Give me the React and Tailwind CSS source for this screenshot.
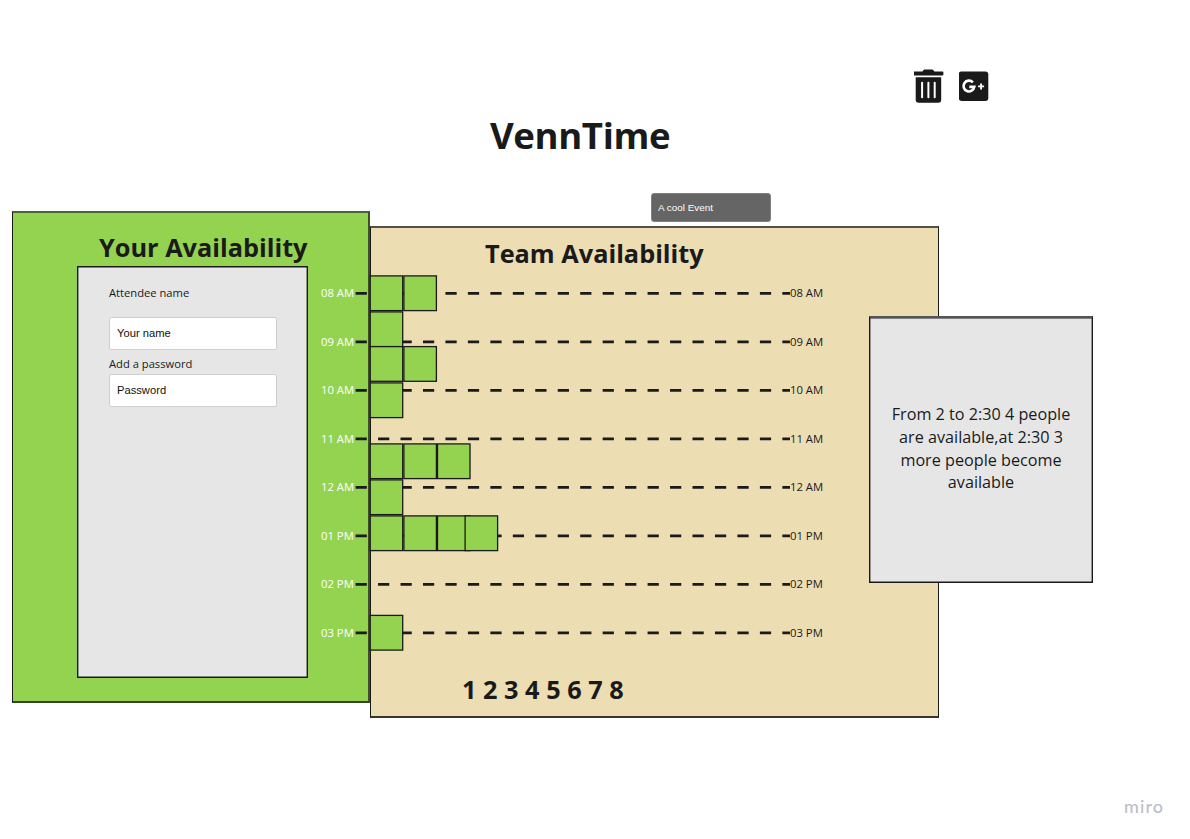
const HOURS = ["08 AM", "09 AM", "10 AM", "11 AM", "12 AM", "01 PM", "02 PM", "03 PM"];

// Availability blocks in chart coordinates: [x, y] of the top left corner
const BLOCKS = [
  [15.2, 1.9], [48.9, 1.9],
  [15.2, 37.9],
  [15.2, 72.6], [48.9, 72.6],
  [15.2, 108.9],
  [15.2, 169.9], [48.9, 169.9], [82.5, 169.9],
  [15.2, 205.9],
  [15.2, 241.9], [48.9, 241.9], [82.5, 241.9], [110.1, 241.9],
  [15.2, 341.4],
];

function TrashIcon() {
  return (
    <svg width="30" height="34" viewBox="0.6 -0.4 30 34" fill="#1a1a1a">
      <path d="M0.8 2.2h8.2l1.2-1.7q.3-.4.8-.4h8q.5 0 .8.4l1.2 1.7h8.2q.8 0 .8.8v2.2q0 .8-.8.8H.8q-.8 0-.8-.8V3q0-.8.8-.8z" />
      <path
        fillRule="evenodd"
        d="M2.3 7.9h25.5v22.5q0 3-3 3H5.3q-3 0-3-3zM7.7 13.1v14.9q0 .8 1 .8t1-.8V13.1q0-.8-1-.8t-1 .8zM14 13.1v14.9q0 .8 1 .8t1-.8V13.1q0-.8-1-.8t-1 .8zM20.3 13.1v14.9q0 .8 1 .8t1-.8V13.1q0-.8-1-.8t-1 .8z"
      />
    </svg>
  );
}

function GooglePlusIcon() {
  return (
    <svg width="30" height="30" viewBox="0.3 -0.4 30 30">
      <rect width="29.6" height="29.6" rx="3" fill="#1a1a1a" />
      <path d="M14.2 10.9A5.4 5.4 0 1 0 15.6 15.5H10.6" fill="none" stroke="#fff" strokeWidth="2.6" />
      <path d="M22.4 12v6M19.4 15h6" stroke="#fff" strokeWidth="1.9" />
    </svg>
  );
}

function Chart() {
  return (
    <svg width="436" height="380" viewBox="0 0 436 380">
      {HOURS.map((h, i) => (
        <line
          key={h}
          x1="0.6" x2="435" y1={19.4 + i * 48.5} y2={19.4 + i * 48.5}
          stroke="#1a1a1a" strokeWidth="2.6" strokeDasharray="11.23 11.23"
        />
      ))}
      {BLOCKS.map(([x, y]) => (
        <rect key={`${x}-${y}`} x={x} y={y} width="32.5" height="34.7" fill="#94d350" stroke="#1a1a1a" strokeWidth="1.3" />
      ))}
    </svg>
  );
}

function Hours({ className }) {
  return (
    <ul className={`flex flex-col text-[11.3px] whitespace-nowrap ${className}`}>
      {HOURS.map((h) => (
        <li key={h} className="flex h-[48.5px] items-center">{h}</li>
      ))}
    </ul>
  );
}

function Field({ value }) {
  return (
    <div className="flex h-[33px] w-[168px] items-center rounded-[2px] border border-[#cfcfcf] bg-white px-[7px] font-['Liberation_Sans',sans-serif] text-[11.2px] text-[#111]">
      {value}
    </div>
  );
}

export default function App() {
  return (
    <div className="relative h-[839px] w-[1190px] overflow-hidden bg-white font-['Open_Sans',sans-serif] text-[#1a1a1a]">
      <header className="flex h-[211px] flex-col">
        <div className="flex gap-[15px] pt-[69px] pl-[914px]">
          <TrashIcon />
          <div className="pt-[2px]"><GooglePlusIcon /></div>
        </div>
        <h1 className="mt-[6px] ml-[490px] text-[36.6px] leading-[52px] font-bold tracking-[-0.4px]">VennTime</h1>
        <div className="mt-[32px] ml-[651px] flex h-[29px] w-[120px] shrink-0 items-center rounded-[3px] border border-[#808080] bg-[#656565] px-[6px] pt-px font-['Liberation_Sans',sans-serif] text-[9.9px] text-white">
          A cool Event
        </div>
      </header>

      <main className="flex pl-[12px]">
        <section className="h-[492px] w-[358px] shrink-0 border border-t-2 border-r-2 border-b-2 border-[#1a1a1a] border-t-[#4f6238] border-r-[#3f5026] border-b-[#37451f] bg-[#94d350]">
          <h2 className="ml-[86px] h-[53px] pt-[16px] text-[25.3px] leading-[36px] font-bold whitespace-nowrap">Your Availability</h2>
          <div className="flex">
            <div className="ml-[64px] h-[412px] w-[231px] shrink-0 border border-[#1a1a1a] bg-[#e6e6e6] pl-[31px] text-[11.2px] shadow-[inset_0_0_0_0.4px_#1a1a1a]">
              <p className="mt-[18px] leading-4">Attendee name</p>
              <div className="mt-[16px]"><Field value="Your name" /></div>
              <p className="mt-[6px] leading-4">Add a password</p>
              <div className="mt-[2px]"><Field value="Password" /></div>
            </div>
            <Hours className="mt-[3.4px] ml-[13px] font-medium text-white" />
          </div>
        </section>

        <section className="relative mt-[15px] h-[492px] w-[569px] shrink-0 border border-t-2 border-b-2 border-[#1a1a1a] border-t-[#55514a] border-b-[#38352e] bg-[#ecddb2]">
          <h2 className="mt-[7px] ml-[114px] text-[25.3px] leading-[36px] font-bold">Team Availability</h2>
          <Hours className="mt-[-1.6px] ml-[419px]" />
          <p className="mt-[13.6px] ml-[91px] text-[25.3px] leading-[36px] font-bold">1 2 3 4 5 6 7 8</p>
          <div className="absolute top-[46px] left-[-16px]"><Chart /></div>
        </section>
      </main>

      <aside className="absolute top-[316px] left-[869px] flex h-[267px] w-[224px] items-center justify-center border border-t-2 border-[#1a1a1a] border-t-[#555] bg-[#e6e6e6] pb-[3px] text-center text-[16.2px] leading-[22.6px] shadow-[inset_0_0_0_0.4px_#1a1a1a]">
        <p className="w-[190px]">
          From 2 to 2:30 4 people<br />are available,at 2:30 3<br />more people become<br />available
        </p>
      </aside>

      <footer className="absolute top-[795px] left-[1124px] font-['Lato',sans-serif] text-[18px] leading-[22px] font-medium tracking-[1.1px] text-[#bdbdc8]">miro</footer>
    </div>
  );
}
